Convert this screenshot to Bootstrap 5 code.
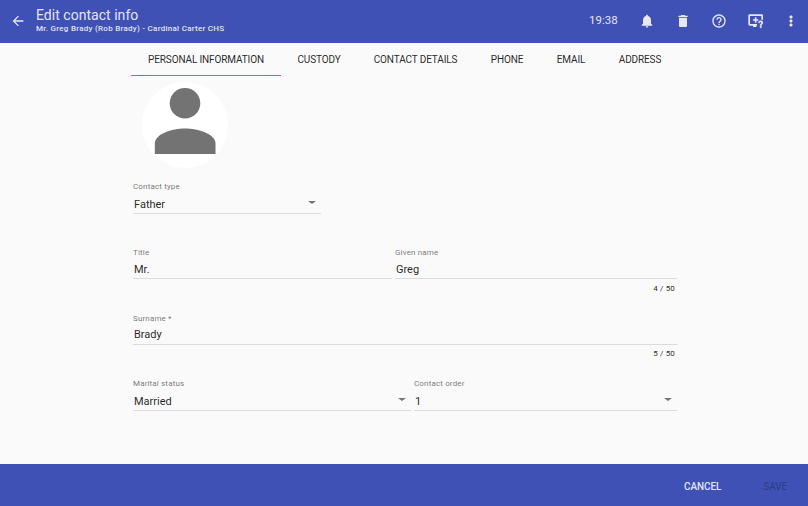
<!DOCTYPE html>
<html lang="en">
<head>
<meta charset="utf-8">
<meta name="viewport" content="width=device-width, initial-scale=1">
<title>Edit contact info</title>
<link href="https://cdn.jsdelivr.net/npm/bootstrap@5.3.0/dist/css/bootstrap.min.css" rel="stylesheet">
<style>
body{font-family:Roboto,"Liberation Sans",sans-serif;background:#fafafa;color:rgba(0,0,0,.87);height:506px;overflow:hidden;line-height:1}
.app-head{height:43px;padding-bottom:2px;background:#3f51b5;color:rgba(255,255,255,.87)}
.app-foot{height:42px;background:#3f51b5;color:rgba(255,255,255,.87);font-size:10px;letter-spacing:-.1px;font-weight:500}
.app-title{font-size:14px;line-height:15px;padding-bottom:1px;letter-spacing:.03px}
.app-sub{font-size:8px;line-height:9px;font-weight:500;letter-spacing:.27px}
.app-clock{font-size:11.5px;font-weight:400;width:50px}
.icon-btn{width:36px;height:36px;color:inherit}
.icon-btn svg{width:16px;height:16px;fill:currentColor;display:block}
.tools{margin-right:-11px}
.form-wrap{width:546px;margin-left:131px}
.tab-row{height:33px;font-size:10px}
.tab-item{color:inherit;text-decoration:none;padding:1px 0 0;border-bottom:1px solid transparent;letter-spacing:-.13px}
.tab-item.current{border-color:#ff4081}
.tab-a{width:150px}.tab-b{width:76px}.tab-c{width:117px}.tab-d{width:66px}.tab-e{width:62px}.tab-f{width:76px}
.avatar{width:86px;height:86px;margin:6px 0 0 11px;background:#fff}
.field-list{padding-left:2px}
.field-box{height:32px;border-bottom:1px solid #dbdbdb;padding-bottom:2px}
.text-box{height:31px;padding-bottom:3px}
.field-name{font-size:8px;line-height:10px;color:rgba(0,0,0,.56);letter-spacing:.15px}
.field-val{font-size:11px;line-height:13px;padding-left:1px}
.caret{width:0;height:0;border:4px solid transparent;border-top:3px solid #757575;border-bottom:0;margin:0 5px 4px 0}
.count-line{font-size:8px;line-height:10px;padding:5px 2px 0 0;letter-spacing:.15px}
.row-type{width:188px;margin-top:14px}
.row-name{margin-top:34px}
.row-name .field-box{padding-bottom:2px}
.row-sur{margin-top:20px}
.row-sur .count-line{padding-top:4px}
.row-mar{margin-top:20px}
.w-title{width:259px}.w-given{width:282px}.w-marital{width:278px}.w-order{width:263px}
.btn-cancel{margin-right:42px}
.btn-save{color:rgba(0,0,0,.3);margin-right:21px;font-weight:400}
</style>
</head>
<body class="d-flex flex-column">
<header class="app-head d-flex align-items-center flex-shrink-0">
  <a class="icon-btn d-flex align-items-center justify-content-center" href="#" aria-label="Back"><svg viewBox="0 0 24 24"><path d="M20 11H7.830l5.590-5.590L12 4l-8 8 8 8 1.410-1.410L7.830 13H20z"/></svg></a>
  <div class="flex-grow-1 align-self-start pt-2">
    <div class="app-title">Edit contact info</div>
    <div class="app-sub">Mr. Greg Brady (Rob Brady) - Cardinal Carter CHS</div>
  </div>
  <div class="app-clock">19:38</div>
  <div class="tools d-flex">
    <a class="icon-btn d-flex align-items-center" href="#" aria-label="Notifications"><svg viewBox="0 0 24 24"><path d="M12 22c1.100 0 2-.9 2-2h-4c0 1.100.890 2 2 2zm6-6v-5c0-3.070-1.640-5.640-4.500-6.320V4c0-.830-.670-1.500-1.500-1.500s-1.500.670-1.500 1.500v.680C7.630 5.360 6 7.920 6 11v5l-2 2v1h16v-1z"/></svg></a>
    <a class="icon-btn d-flex align-items-center" href="#" aria-label="Delete"><svg viewBox="0 0 24 24"><path d="M6 19c0 1.100.9 2 2 2h8c1.100 0 2-.9 2-2V7H6zM19 4h-3.500l-1-1h-5l-1 1H5v2h14z"/></svg></a>
    <a class="icon-btn d-flex align-items-center" href="#" aria-label="Help"><svg viewBox="0 0 24 24"><path d="M11 18h2v-2h-2zm1-16C6.480 2 2 6.480 2 12s4.480 10 10 10 10-4.480 10-10S17.520 2 12 2zm0 18c-4.410 0-8-3.590-8-8s3.590-8 8-8 8 3.590 8 8-3.590 8-8 8zm0-14c-2.210 0-4 1.790-4 4h2c0-1.100.9-2 2-2s2 .9 2 2c0 2-3 1.750-3 5h2c0-2.250 3-2.500 3-5 0-2.210-1.790-4-4-4z"/></svg></a>
    <a class="icon-btn d-flex align-items-center" href="#" aria-label="Remote support"><svg viewBox="0 0 24 24"><path d="M4 2h18c1.100 0 2 .9 2 2v6h-2.500V4.500H4.500v12H15v2.500h-1v2H9v-2H4c-1.100 0-2-.9-2-2V4c0-1.100.9-2 2-2zM11.800 6.500h2.400v2.800h2.800v2.400h-2.800v2.800h-2.400v-2.800H9V9.300h2.800z"/><path stroke="currentColor" stroke-width=".8" d="M20.500 11.500c-2 0-3.500 1.500-3.500 3.300h2c0-.8.600-1.400 1.500-1.400s1.500.6 1.500 1.300c0 1.300-2.400 1.500-2.400 4h2c0-1.700 2.400-2 2.400-4.100 0-1.700-1.500-3.100-3.500-3.100zM19.600 20h2v2h-2z"/></svg></a>
    <a class="icon-btn d-flex align-items-center" href="#" aria-label="More"><svg viewBox="0 0 24 24"><path stroke="currentColor" stroke-width=".8" d="M12 8c1.100 0 2-.9 2-2s-.9-2-2-2-2 .9-2 2 .9 2 2 2zm0 2c-1.100 0-2 .9-2 2s.9 2 2 2 2-.9 2-2-.9-2-2-2zm0 6c-1.100 0-2 .9-2 2s.9 2 2 2 2-.9 2-2-.9-2-2-2z"/></svg></a>
  </div>
</header>
<main class="form-wrap flex-grow-1">
  <nav class="tab-row d-flex text-center">
    <a href="#" class="tab-item tab-a current d-flex flex-shrink-0 align-items-center justify-content-center">PERSONAL INFORMATION</a>
    <a href="#" class="tab-item tab-b d-flex flex-shrink-0 align-items-center justify-content-center">CUSTODY</a>
    <a href="#" class="tab-item tab-c d-flex flex-shrink-0 align-items-center justify-content-center">CONTACT DETAILS</a>
    <a href="#" class="tab-item tab-d d-flex flex-shrink-0 align-items-center justify-content-center">PHONE</a>
    <a href="#" class="tab-item tab-e d-flex flex-shrink-0 align-items-center justify-content-center">EMAIL</a>
    <a href="#" class="tab-item tab-f d-flex flex-shrink-0 align-items-center justify-content-center">ADDRESS</a>
  </nav>
  <div class="avatar rounded-circle overflow-hidden">
    <svg class="d-block" width="86" height="86" viewBox="0 0 86 86" fill="#737373"><circle cx="43" cy="21.300" r="15.300"/><path d="M12.800 72V61.500C12.800 52 30 46.500 43 46.500S73.500 52 73.500 61.500V72z"/></svg>
  </div>
  <div class="field-list">
    <div class="row-type">
      <div class="field-box d-flex flex-column justify-content-between">
        <div class="field-name">Contact type</div>
        <div class="field-val d-flex justify-content-between align-items-center">Father<span class="caret"></span></div>
      </div>
    </div>
    <div class="row-name d-flex justify-content-between">
      <div class="w-title"><div class="field-box text-box d-flex flex-column justify-content-between"><div class="field-name">Title</div><div class="field-val">Mr.</div></div></div>
      <div class="w-given"><div class="field-box text-box d-flex flex-column justify-content-between"><div class="field-name">Given name</div><div class="field-val">Greg</div></div>
        <div class="count-line text-end">4 / 50</div></div>
    </div>
    <div class="row-sur">
      <div class="field-box text-box d-flex flex-column justify-content-between"><div class="field-name">Surname *</div><div class="field-val">Brady</div></div>
      <div class="count-line text-end">5 / 50</div>
    </div>
    <div class="row-mar d-flex justify-content-between">
      <div class="w-marital"><div class="field-box d-flex flex-column justify-content-between"><div class="field-name">Marital status</div><div class="field-val d-flex justify-content-between align-items-center">Married<span class="caret"></span></div></div></div>
      <div class="w-order"><div class="field-box d-flex flex-column justify-content-between"><div class="field-name">Contact order</div><div class="field-val d-flex justify-content-between align-items-center">1<span class="caret"></span></div></div></div>
    </div>
  </div>
</main>
<footer class="app-foot d-flex align-items-center justify-content-end flex-shrink-0 pt-1">
  <div class="btn-cancel">CANCEL</div>
  <div class="btn-save">SAVE</div>
</footer>
<script src="https://cdn.jsdelivr.net/npm/bootstrap@5.3.0/dist/js/bootstrap.bundle.min.js"></script>
</body>
</html>
